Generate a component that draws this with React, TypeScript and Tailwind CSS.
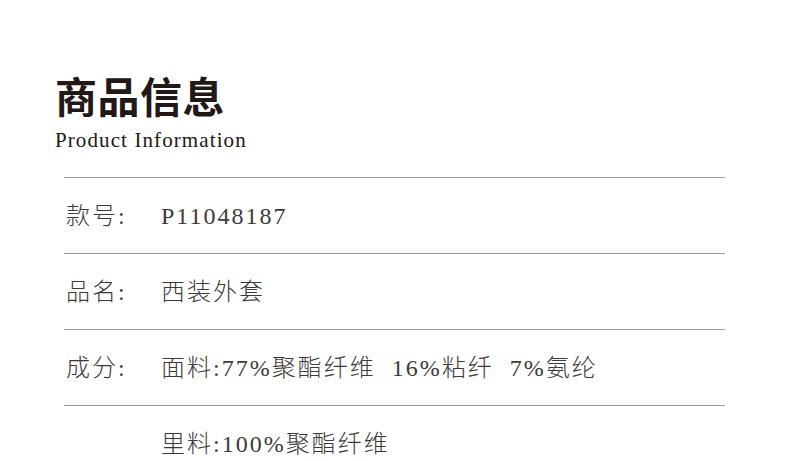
const rowFont = {
  fontFamily: '"Liberation Serif", "Noto Sans CJK SC", serif',
};

const rows = [
  { label: "款号:", value: "P11048187" },
  { label: "品名:", value: "西装外套" },
  { label: "成分:", value: "面料:77%聚酯纤维\u00a0\u00a016%粘纤\u00a0\u00a07%氨纶" },
  { label: "", value: "里料:100%聚酯纤维" },
];

export default function App() {
  return (
    <div className="w-[790px] h-[461px] bg-white overflow-hidden pl-[55px] pt-[74px]">
      {/* Heading */}
      <div
        className="text-[42px] leading-none font-bold text-[#231815] tracking-[0.5px]"
        style={{ fontFamily: '"Noto Sans CJK SC", sans-serif' }}
      >
        商品信息
      </div>
      <div
        className="mt-[14px] text-[21px] leading-none text-[#231815] tracking-[1.1px]"
        style={{ fontFamily: '"Liberation Serif", serif' }}
      >
        Product Information
      </div>

      {/* Spec rows */}
      <div className="mt-[26px] ml-[9px] w-[661px]">
        {rows.map((row, idx) => (
          <div
            key={idx}
            className="h-[76px] border-t border-[#9a9a9a] flex items-center text-[24px] text-[#3e3a39] font-light tracking-[2px]"
            style={rowFont}
          >
            <span className="w-[97px] pl-[2px] shrink-0">{row.label}</span>
            <span>{row.value}</span>
          </div>
        ))}
      </div>
    </div>
  );
}
